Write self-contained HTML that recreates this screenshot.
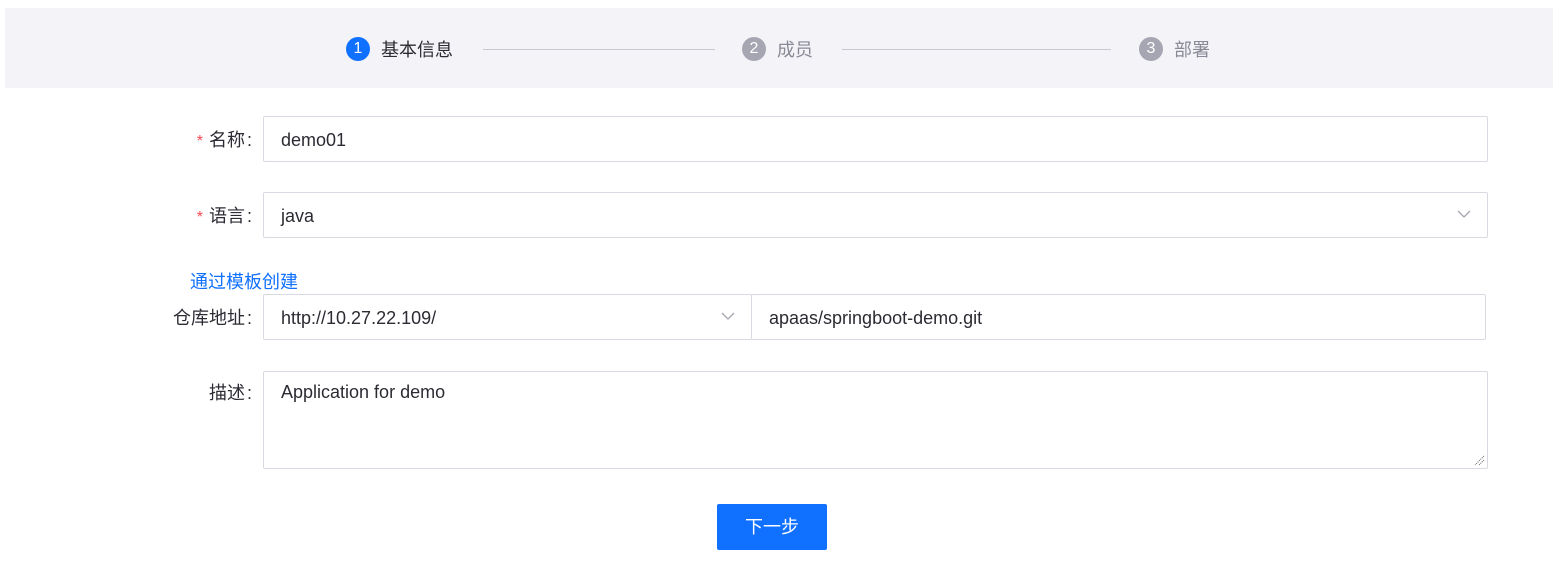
<!DOCTYPE html>
<html><head><meta charset="utf-8"><style>
*{box-sizing:border-box;margin:0;padding:0}
body{width:1558px;height:569px;background:#fff;font-family:"Liberation Sans","Noto Sans CJK SC",sans-serif;position:relative;overflow:hidden;color:#2b2b33}
.abs{position:absolute}
.head{left:5px;top:8px;width:1548px;height:80px;background:#f4f4f8}
.circ{width:24px;height:24px;border-radius:50%;color:#fff;font-size:16px;line-height:24px;text-align:center;top:37px}
.st{top:38px;font-size:18px;line-height:24px}
.line{height:1px;background:#c8c8d0;top:49px}
.lbl{font-size:18px;line-height:24px;text-align:right;width:150px;left:105px;color:#2b2b33}
.lbl .c{padding-left:2px;padding-right:3px}
.req{color:#f5484f;margin-right:6px;font-size:16px}
.box{border:1px solid #d9d9e1;border-radius:2px;background:#fff;font-size:18px;padding-left:17px;padding-top:2px;display:flex;align-items:center}
.chev{position:absolute;right:16px;top:50%;margin-top:-5px}
</style></head><body>
<div class="abs head"></div>
<div class="abs circ" style="left:346px;background:#1070ff">1</div>
<div class="abs st" style="left:381px">基本信息</div>
<div class="abs line" style="left:483px;width:232px"></div>
<div class="abs circ" style="left:742px;background:#a6a6b2">2</div>
<div class="abs st" style="left:777px;color:#8a8a96">成员</div>
<div class="abs line" style="left:842px;width:269px"></div>
<div class="abs circ" style="left:1139px;background:#a6a6b2">3</div>
<div class="abs st" style="left:1174px;color:#8a8a96">部署</div>

<div class="abs lbl" style="top:128px"><span class="req">*</span>名称<span class="c">:</span></div>
<div class="abs box" style="left:263px;top:116px;width:1225px;height:46px">demo01</div>

<div class="abs lbl" style="top:204px"><span class="req">*</span>语言<span class="c">:</span></div>
<div class="abs box" style="left:263px;top:192px;width:1225px;height:46px">java
<svg class="chev" width="14" height="9" viewBox="0 0 14 9"><path d="M1 1l6 6 6-6" fill="none" stroke="#a6a6b2" stroke-width="1.3"/></svg></div>

<div class="abs" style="left:190px;top:270px;font-size:18px;color:#1070ff;line-height:24px">通过模板创建</div>
<div class="abs lbl" style="top:306px">仓库地址<span class="c">:</span></div>
<div class="abs box" style="left:263px;top:294px;width:489px;height:46px">http://10.27.22.109/
<svg class="chev" width="14" height="9" viewBox="0 0 14 9"><path d="M1 1l6 6 6-6" fill="none" stroke="#a6a6b2" stroke-width="1.3"/></svg></div>
<div class="abs box" style="left:751px;top:294px;width:735px;height:46px">apaas/springboot-demo.git</div>

<div class="abs lbl" style="top:381px">描述<span class="c">:</span></div>
<div class="abs box" style="left:263px;top:371px;width:1225px;height:98px;align-items:flex-start;padding-top:10px">Application for demo
<svg class="abs" style="right:2px;bottom:2px" width="12" height="12" viewBox="0 0 12 12"><path d="M11 2L2 11M11 6L6 11" stroke="#666" stroke-width="1" stroke-dasharray="1 1"/></svg></div>

<div class="abs" style="left:717px;top:504px;width:110px;height:46px;background:#1070ff;border-radius:2px;color:#fff;font-size:18px;line-height:46px;text-align:center">下一步</div>
</body></html>
